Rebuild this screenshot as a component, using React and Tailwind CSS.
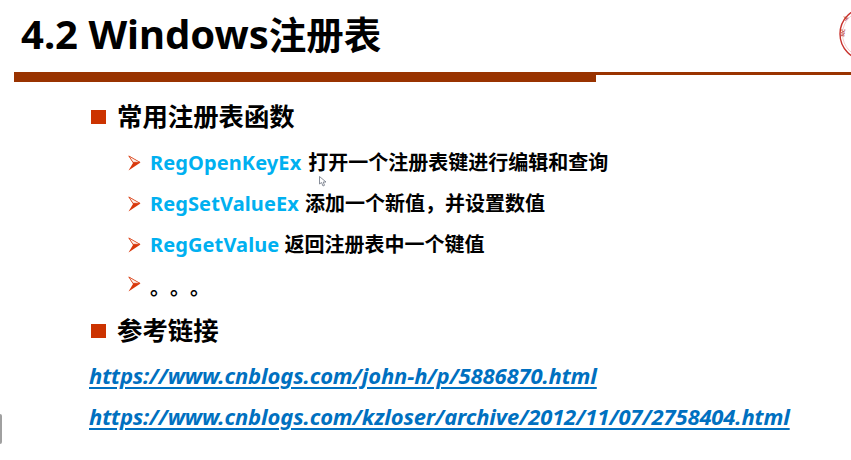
const font = { fontFamily: '"Noto Sans", "Noto Sans CJK SC", sans-serif' };

function Arrow({ className = "" }) {
  return (
    <svg width="13" height="16" viewBox="0 0 13 16" className={`shrink-0 ${className}`}>
      <path d="M0.5 0.5 L12.5 7.5 L0.5 15.5 L5 8 Z" fill="#d9380b" />
      <path d="M0.8 1 L12 7.3 L5 7.3 Z" fill="#fdf0ea" stroke="#d9380b" strokeWidth="0.7" />
    </svg>
  );
}

function Square() {
  return <div className="w-[15px] h-[14px] bg-[#cc3300] shrink-0" />;
}

function Sub({ name, text, gapClass }) {
  return (
    <div className="flex items-center h-[41px]">
      <Arrow />
      <span className="ml-[9px] text-[20px] font-bold text-[#00b0f0] tracking-[0.1px] leading-none">{name}</span>
      <span className={`${gapClass} text-[20px] font-bold text-black leading-none`}>{text}</span>
    </div>
  );
}

function Link({ children }) {
  return (
    <div className="h-[41px] flex items-center">
      <span className="text-[22px] font-bold italic text-[#0070c0] underline decoration-2 underline-offset-[3px] tracking-[-0.15px] leading-none">
        {children}
      </span>
    </div>
  );
}

export default function App() {
  return (
    <div style={font} className="relative w-[851px] h-[460px] bg-white overflow-hidden">
      <div className="h-[72px] pl-[21px] pt-[9px]">
        <h1 className="font-bold text-black leading-[50px] flex items-baseline">
          <span className="text-[40px]">4.2 Windows</span>
          <span className="text-[37.5px]">注册表</span>
        </h1>
      </div>
      <div className="flex items-start pl-[14px]">
        <div className="w-[582px] h-[10px] bg-[#993300]" />
        <div className="flex-1 h-[3px] bg-[#993300]" />
      </div>
      <div className="pl-[91px] pt-[15px]">
        <div className="flex items-center gap-[11px] h-[40px]">
          <Square />
          <span className="text-[25.4px] font-bold text-black leading-none">常用注册表函数</span>
        </div>
        <div className="pl-[37px] pt-[5px]">
          <Sub name="RegOpenKeyEx" text="打开一个注册表键进行编辑和查询" gapClass="ml-[7px]" />
          <Sub name="RegSetValueEx" text="添加一个新值，并设置数值" gapClass="ml-[6px]" />
          <Sub name="RegGetValue" text="返回注册表中一个键值" gapClass="ml-[5px]" />
          <div className="flex items-center h-[41px]">
            <Arrow className="-mt-[4px]" />
            <span className="ml-[9px] text-[20px] font-bold text-black leading-none pt-[5px] [text-spacing-trim:space-all]">。。。</span>
          </div>
        </div>
        <div className="flex items-center gap-[11px] h-[46px] mt-[2px]">
          <Square />
          <span className="text-[25.4px] font-bold text-black leading-none">参考链接</span>
        </div>
        <div className="-ml-[2px]">
          <Link>https://www.cnblogs.com/john-h/p/5886870.html</Link>
          <Link>https://www.cnblogs.com/kzloser/archive/2012/11/07/2758404.html</Link>
        </div>
      </div>
      <svg width="8" height="11" viewBox="0 0 8 11" className="absolute left-[319px] top-[176px]">
        <path d="M0.5 0.5 L0.5 8 L2.5 6.5 L4 10 L5.5 9.3 L4.2 6 L7 6 Z" fill="#ffffff" stroke="#6b7280" strokeWidth="0.8" />
      </svg>
      <svg width="12" height="54" viewBox="0 0 12 54" className="absolute left-[839px] top-[7px]">
        <circle cx="27" cy="27" r="26" fill="none" stroke="#c8322d" strokeWidth="1.4" />
        <circle cx="27" cy="27" r="23.5" fill="none" stroke="#e3a09c" strokeWidth="0.5" />
        <text x="5" y="30" fontSize="5" fontWeight="700" fill="#b83a36" transform="rotate(-80 5 30)">SIC</text>
        <text x="5" y="12" fontSize="5" fontWeight="700" fill="#b83a36" transform="rotate(-45 8 12)">上</text>
      </svg>
      <div className="absolute left-0 top-[414px] w-[2px] h-[30px] bg-[#a0a0a0] rounded-r-[2px]" />
    </div>
  );
}
